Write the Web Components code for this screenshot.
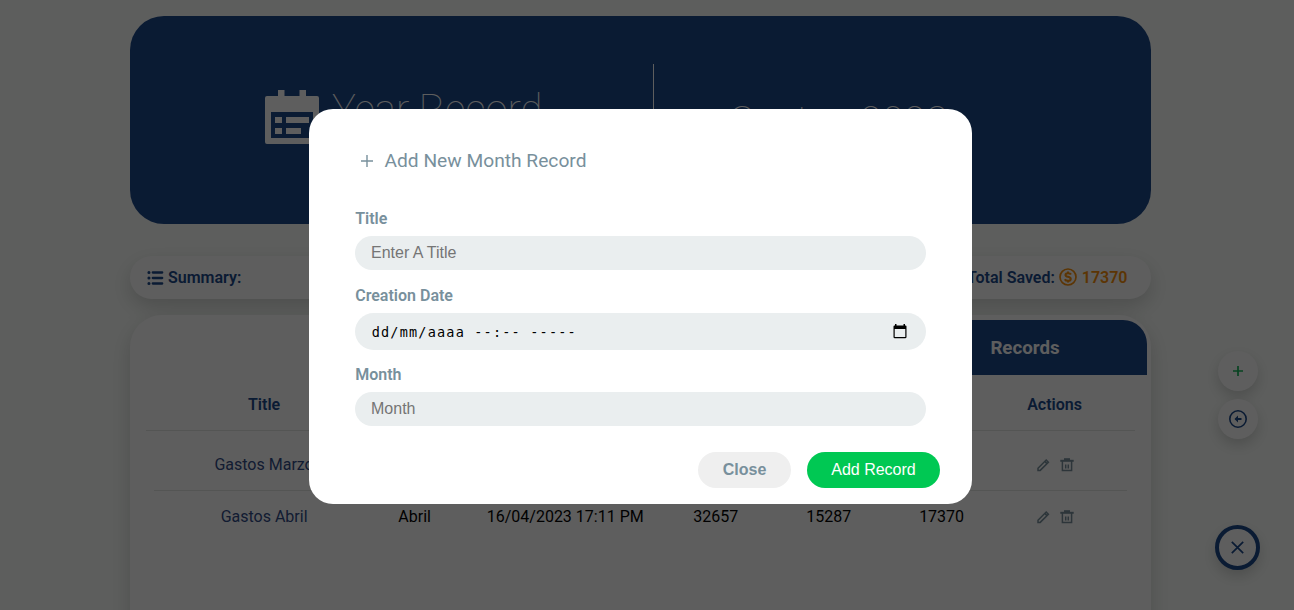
<!DOCTYPE html>
<html lang="es"><head><meta charset="utf-8"><title>Year Record</title>
<style>
html,body{margin:0;height:610px;overflow:hidden;background:#fcfffc}
body{font:16px/20px Roboto,"Liberation Sans",sans-serif;--navy:#1a478a;--slate:#78909c;position:relative}
</style></head><body>
<year-page></year-page>
<script>
const define=(name,html)=>customElements.define(name,class extends HTMLElement{
  constructor(){super();const t=document.createElement('template');
    t.innerHTML='<style>*{box-sizing:border-box}svg{display:block;flex:none}</style>'+html;
    this.attachShadow({mode:'open'}).append(t.content.cloneNode(true));}
});

define('year-banner',`<style>
:host{display:grid;grid-template-columns:523px 1px 1fr;height:208px;padding:48px 0;border-radius:34px;background:var(--navy);color:#fff}
.rule{background:#fff}
.left{display:flex;padding:26px 0 0 135px;gap:13px}
h1,h2{margin:0;font-weight:100;font-size:40px;line-height:48px;white-space:nowrap}
h1{margin-top:-4px}
h2{padding:34px 0 0 74px}
</style>
<div class="left"><svg width="54" height="54" viewBox="0 0 54 54"><path fill="#fff" fill-rule="evenodd" d="M13 0h6.500v6h15V0H41v6h11a2 2 0 0 1 2 2v44a2 2 0 0 1-2 2H2a2 2 0 0 1-2-2V8a2 2 0 0 1 2-2h11zM6 22v26h42V22zM10 27h7v6h-7zM21 27h23v6H21zM10 38h7v6h-7zM21 38h15v6H21z"/></svg><h1>Year Record</h1></div>
<div class="rule"></div><h2>Gastos 2023</h2>`);

define('summary-bar',`<style>
:host{display:flex;align-items:center;justify-content:space-between;height:43px;margin-top:32px;padding:0 23.500px 0 17px;border-radius:24px;background:#fff;box-shadow:0 8px 20px rgba(0,0,0,.17);font-weight:600;color:var(--navy)}
div{display:flex;align-items:center;gap:4px}
.gold{color:#f88f0a;display:flex;gap:5px}
</style>
<div><svg width="17" height="16" viewBox="0 0 17 16" fill="none" stroke="currentColor" stroke-width="2.300" stroke-linecap="round"><path d="M5.800 2.500h9.400M5.800 8h9.400M5.800 13.500h9.400"/><path d="M1.900 2.500h.1M1.900 8h.1M1.900 13.500h.1" stroke-width="3"/></svg><span>Summary:</span></div>
<div><span>Total Saved:</span><span class="gold"><svg width="18" height="18" viewBox="0 0 18 18" fill="none" stroke="currentColor"><circle cx="9" cy="9" r="8" stroke-width="1.700"/><path stroke-width="2.100" d="M12 6.500c-.5-1-1.500-1.300-3-1.300-1.600 0-2.500.6-2.500 1.700 0 2.500 5.200 1.300 5.200 4 0 1.300-1.100 1.900-2.700 1.900-1.600 0-2.700-.6-3.200-1.600M9 3.500v2M9 12.500v2"/></svg>17370</span></div>`);

define('record-row',`<style>
:host{display:grid;grid-template-columns:5fr 3fr 5fr 3fr 3fr 3fr 3fr;text-align:center;align-items:center;margin:0 24px;padding:0 16px}
:host([kind=head]){margin:0 16px;padding:0 24px;height:56px;border-bottom:1px solid #e3e6e4;font-weight:600;color:var(--navy);padding-top:4px}
:host([kind=first]){height:60px;border-bottom:1px solid #e3e6e4;padding-top:8px}
:host([kind=last]){height:52px}
</style><slot></slot>`);

define('row-actions',`<style>:host{display:flex;justify-content:center;gap:10px;color:var(--slate)}</style>
<svg width="14" height="16" viewBox="0 0 14 16" fill="none" stroke="currentColor" stroke-width="1.500"><path d="M2 11.200 10.200 3l2.200 2.200-8.200 8.200H2zM8.800 4.400 11 6.600"/></svg>
<svg width="14" height="16" viewBox="0 0 14 16" fill="none" stroke="currentColor"><path d="M.3 3.800h13.400" stroke-width="2"/><path d="M4 2.500h6" stroke-width="2.600"/><path d="M2.400 4v9.600h9.200V4" stroke-width="1.500"/><path d="M5.700 7.500v4M8.300 7.500v4" stroke-width="1.500"/></svg>`);

define('records-card',`<style>
:host{display:block;height:340px;margin-top:16px;padding:5px 0 0;border-radius:32px 32px 0 0;background:#fff;box-shadow:0 8px 20px rgba(0,0,0,.17)}
.tab{width:244px;height:55px;margin:0 4px 0 auto;background:var(--navy);border-radius:0 24px 0 0;color:#fff;font:700 18.720px/56px Roboto,sans-serif;text-align:center}
.name{color:#304a86}
</style>
<div class="tab">Records</div>
<record-row kind="head"><span>Title</span><i></i><i></i><i></i><i></i><i></i><span>Actions</span></record-row>
<record-row kind="first"><span class="name">Gastos Marzo</span><i></i><i></i><i></i><i></i><i></i><row-actions></row-actions></record-row>
<record-row kind="last"><span class="name">Gastos Abril</span><span>Abril</span><span>16/04/2023 17:11 PM</span><span>32657</span><span>15287</span><span>17370</span><row-actions></row-actions></record-row>`);

define('round-button',`<style>
:host{display:grid;place-items:center;width:40px;height:40px;border-radius:50%;background:#fff;box-shadow:0 6px 14px rgba(0,0,0,.17);color:var(--navy)}
:host([ring]){width:45px;height:45px;border:4px solid var(--navy);box-sizing:border-box}
</style><slot></slot>`);

define('floating-actions',`<style>
:host{position:absolute;left:1215px;top:351px;width:45px;display:flex;flex-direction:column;align-items:center;gap:8px}
[ring]{margin-top:78px}
</style>
<round-button><svg width="10" height="10" fill="none" stroke="#13b55a" stroke-width="1.700"><path d="M0 5h10M5 0v10"/></svg></round-button>
<round-button><svg width="18" height="18" viewBox="0 0 18 18" fill="none" stroke="currentColor"><circle cx="9" cy="9" r="8.200" stroke-width="1.600"/><path d="M6.500 9h6" stroke-width="2"/><path d="M9 5.500 5.500 9 9 12.500z" fill="currentColor" stroke="none"/></svg></round-button>
<round-button ring><svg width="13" height="13" fill="none" stroke="currentColor" stroke-width="1.700"><path d="m.8.8 11.400 11.400M12.200.8.800 12.200"/></svg></round-button>`);

define('form-field',`<style>
:host{display:block}
.label{font-weight:600;color:var(--slate);line-height:20px;padding:1px 0 0 .2px;height:20px}
.box{display:flex;align-items:center;justify-content:space-between;height:34px;margin-top:8px;padding:0 16px;border-radius:19px;background:#eaeeef;color:#757575;font:16px/20px "Liberation Sans",sans-serif}
:host([date]) .box{height:37px;padding-right:19px;color:#000;font:13.500px/20px "DejaVu Sans Mono",monospace;letter-spacing:1.200px}
</style><div class="label"><slot name="label"></slot></div><div class="box"><slot></slot></div>`);

define('pill-button',`<style>
:host{display:block;height:36px;width:93px;border-radius:18px;background:#efefef;color:var(--slate);font:700 16px/35px "Liberation Sans",sans-serif;text-align:center}
:host([primary]){width:133px;background:#00c853;color:#fff;font-weight:400}
</style><slot></slot>`);

define('month-dialog',`<style>
:host{display:block;width:663px;height:395px;border-radius:24px;background:#fff;padding:40px 46px 0}
.heading{display:flex;align-items:center;gap:11.500px;padding-left:6px;height:23px;color:var(--slate);font-size:19.200px;line-height:23px;margin-bottom:36px}
form-field+form-field{margin-top:15px}
form-field[date]+form-field{margin-top:14px}
form-field[date] span:not([slot]){padding:1px 0 0 .7px}
.buttons{display:flex;justify-content:flex-end;gap:16px;margin:26px -14px 0 0}
</style>
<div class="heading"><svg width="12" height="12" fill="none" stroke="currentColor" stroke-width="1.400"><path d="M0 6h12M6 0v12"/></svg><span>Add New Month Record</span></div>
<form-field><span slot="label">Title</span>Enter A Title</form-field>
<form-field date><span slot="label">Creation Date</span><span>dd/mm/aaaa --:-- -----</span><svg width="14" height="15" viewBox="0 0 14 15" fill="#000"><path fill-rule="evenodd" d="M2 0h1.500v1.500h7V0H12v1.500h.5a1 1 0 0 1 1 1V13a1.300 1.300 0 0 1-1.300 1.300H1.800A1.300 1.300 0 0 1 .5 13V2.500a1 1 0 0 1 1-1H2zM1.700 5v8h10.600V5z"/></svg></form-field>
<form-field><span slot="label">Month</span>Month</form-field>
<div class="buttons"><pill-button>Close</pill-button><pill-button primary>Add Record</pill-button></div>`);

define('year-page',`<style>
:host{display:block;position:relative;height:610px;overflow:hidden}
main{width:1021px;margin-left:130px;padding-top:16px}
.overlay{position:absolute;inset:0;display:flex;justify-content:center;align-items:flex-start;padding:109px 13px 0 0;background:rgba(1,2,1,.635)}
</style><main><year-banner></year-banner><summary-bar></summary-bar><records-card></records-card></main>
<floating-actions></floating-actions><div class="overlay"><month-dialog></month-dialog></div>`);
</script></body></html>
